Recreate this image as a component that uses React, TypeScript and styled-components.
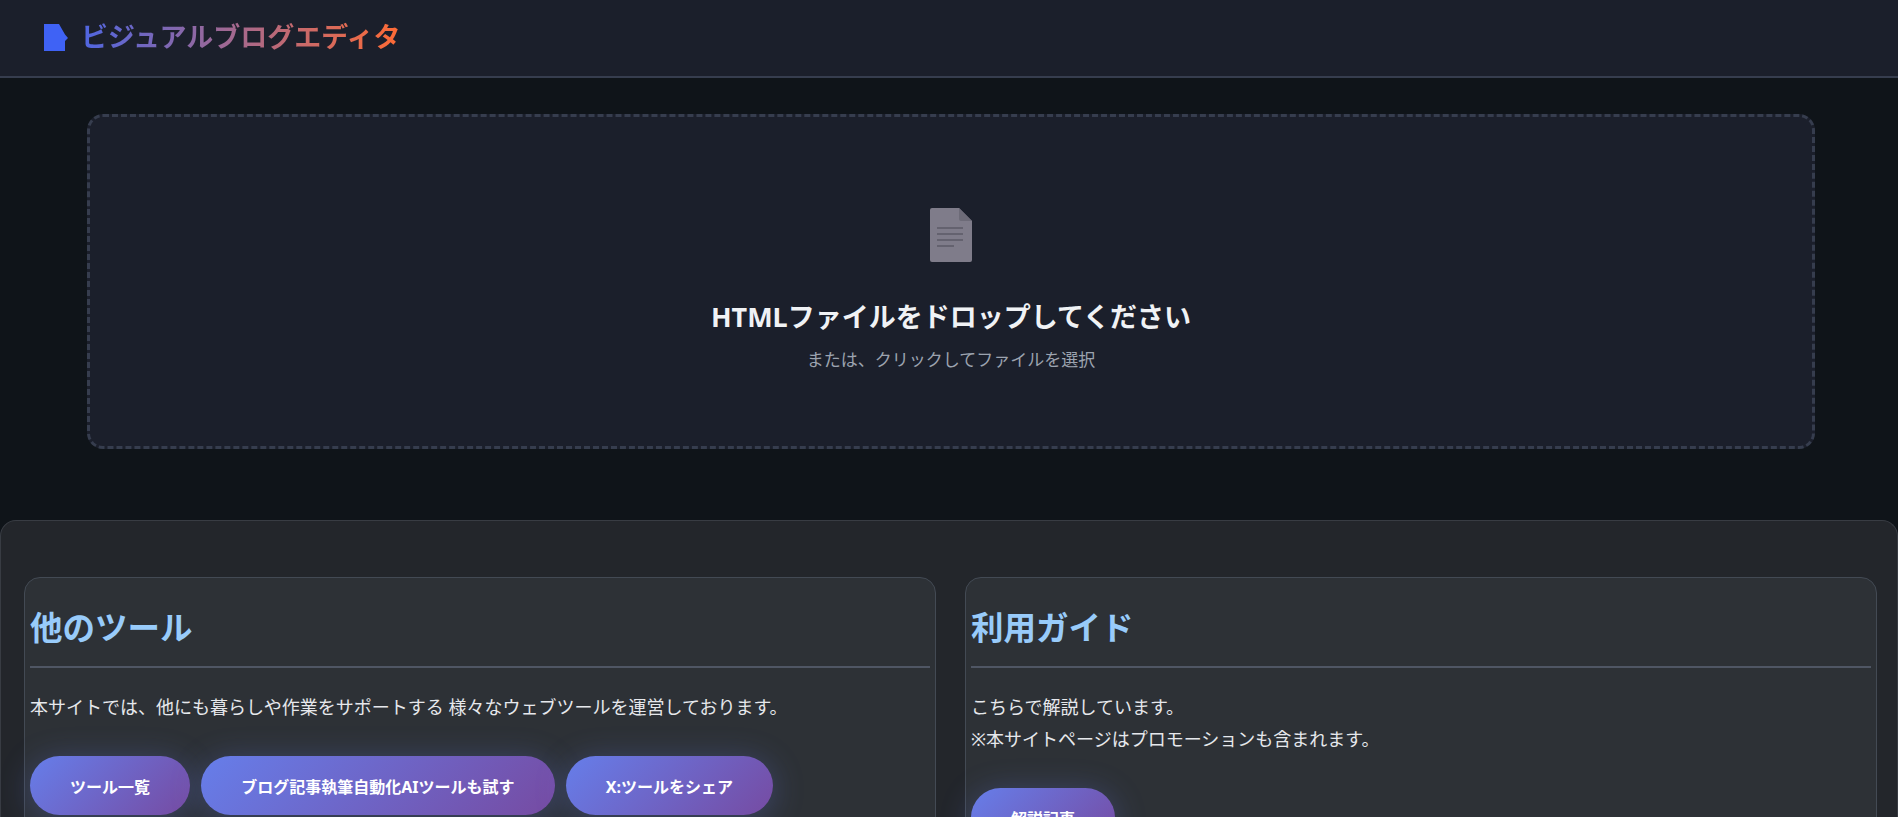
import React from "react";
import styled, { createGlobalStyle } from "styled-components";

const Global = createGlobalStyle`
  * { box-sizing: border-box; }
  html, body { margin: 0; padding: 0; background: #0f1419; overflow: hidden; height: 817px; }
  body { font-family: "Noto Sans", "Noto Sans CJK JP", sans-serif; color: #e0e0e0; }
`;

const Page = styled.div`
  display: flex;
  flex-direction: column;
  height: 817px;
  overflow: hidden;
`;

const Header = styled.header`
  flex: none;
  height: 78px;
  display: flex;
  align-items: center;
  gap: 13px;
  padding: 0 0 2px 44px;
  background: #1b1f2b;
  border-bottom: 2px solid #363d4e;
`;

const LogoIcon = styled.svg`
  width: 24px;
  height: 27px;
  flex: none;
`;

const Title = styled.h1`
  margin: 0;
  font-size: 27px;
  line-height: 36px;
  font-weight: 700;
  background: linear-gradient(90deg, #4f66e2 0%, #ff6b35 100%);
  -webkit-background-clip: text;
  background-clip: text;
  color: transparent;
`;

const Main = styled.main`
  flex: none;
  padding: 36px 83px 71px 87px;
`;

const DropZone = styled.div`
  height: 335px;
  display: flex;
  flex-direction: column;
  align-items: center;
  padding-top: 91px;
  background: #1b1f2b;
  border: 3px dashed #363d4e;
  border-radius: 16px;
`;

const FileIcon = styled.svg`
  width: 42px;
  height: 54px;
  flex: none;
`;

const DropTitle = styled.h3`
  margin: 35px 0 0;
  font-size: 27px;
  line-height: 40px;
  font-weight: 700;
  color: #f0f2f5;
`;

const DropHint = styled.p`
  margin: 7px 0 0;
  font-size: 17px;
  line-height: 32px;
  color: #9ca3af;
`;

const Panel = styled.section`
  flex: 1;
  display: grid;
  grid-template-columns: 1fr 1fr;
  gap: 29px;
  align-items: start;
  padding: 56px 20px 0 23px;
  background: #23262b;
  border: 1px solid #383c43;
  border-bottom: 0;
  border-radius: 16px 16px 0 0;
`;

const Card = styled.article`
  height: 400px;
  padding: 5px;
  background: #2d3136;
  border: 1px solid #434a54;
  border-radius: 16px;
`;

const CardTitle = styled.h2`
  margin: 0 0 23px;
  padding: 21px 0 14px;
  font-size: 32.5px;
  line-height: 48px;
  font-weight: 700;
  color: #98cbfa;
  border-bottom: 2px solid #4f5664;
`;

const CardText = styled.p`
  margin: 0;
  font-size: 18px;
  line-height: 32px;
  color: #e6e8ec;
`;

const ButtonRow = styled.div`
  display: flex;
  gap: 11.2px;
  margin-top: 33px;
`;

const PillButton = styled.a`
  display: inline-flex;
  align-items: center;
  height: 59px;
  padding: 0 40px;
  font-size: 16px;
  font-weight: 700;
  color: #fff;
  border-radius: 30px;
  background: linear-gradient(135deg, #667eea 0%, #764ba2 100%);
  box-shadow: 0 4px 32px rgba(102, 126, 234, 0.3);
`;

export default function App() {
  return (
    <Page>
      <Global />
      <Header>
        <LogoIcon viewBox="0 0 24 27" aria-hidden="true">
          <path d="M0 0H15L21 10.5L24 14L21 17V27H0Z" fill="#3f62f5" />
        </LogoIcon>
        <Title>ビジュアルブログエディタ</Title>
      </Header>
      <Main>
        <DropZone>
          <FileIcon viewBox="0 0 42 54" aria-hidden="true">
            <path d="M2 0H29L42 13V52a2 2 0 0 1-2 2H2a2 2 0 0 1-2-2V2a2 2 0 0 1 2-2Z" fill="#7f7c8a" />
            <path d="M29 0L42 13H31a2 2 0 0 1-2-2Z" fill="#6d6b78" />
            <path d="M7 20H33M7 26H33M7 32H33M7 38H24" stroke="#5c5a67" strokeWidth="1.6" fill="none" />
          </FileIcon>
          <DropTitle>HTMLファイルをドロップしてください</DropTitle>
          <DropHint>または、クリックしてファイルを選択</DropHint>
        </DropZone>
      </Main>
      <Panel>
        <Card>
          <CardTitle>他のツール</CardTitle>
          <CardText>本サイトでは、他にも暮らしや作業をサポートする 様々なウェブツールを運営しております。</CardText>
          <ButtonRow>
            <PillButton>ツール一覧</PillButton>
            <PillButton>ブログ記事執筆自動化AIツールも試す</PillButton>
            <PillButton>X:ツールをシェア</PillButton>
          </ButtonRow>
        </Card>
        <Card>
          <CardTitle>利用ガイド</CardTitle>
          <CardText>こちらで解説しています。</CardText>
          <CardText>※本サイトページはプロモーションも含まれます。</CardText>
          <ButtonRow>
            <PillButton>解説記事</PillButton>
          </ButtonRow>
        </Card>
      </Panel>
    </Page>
  );
}
